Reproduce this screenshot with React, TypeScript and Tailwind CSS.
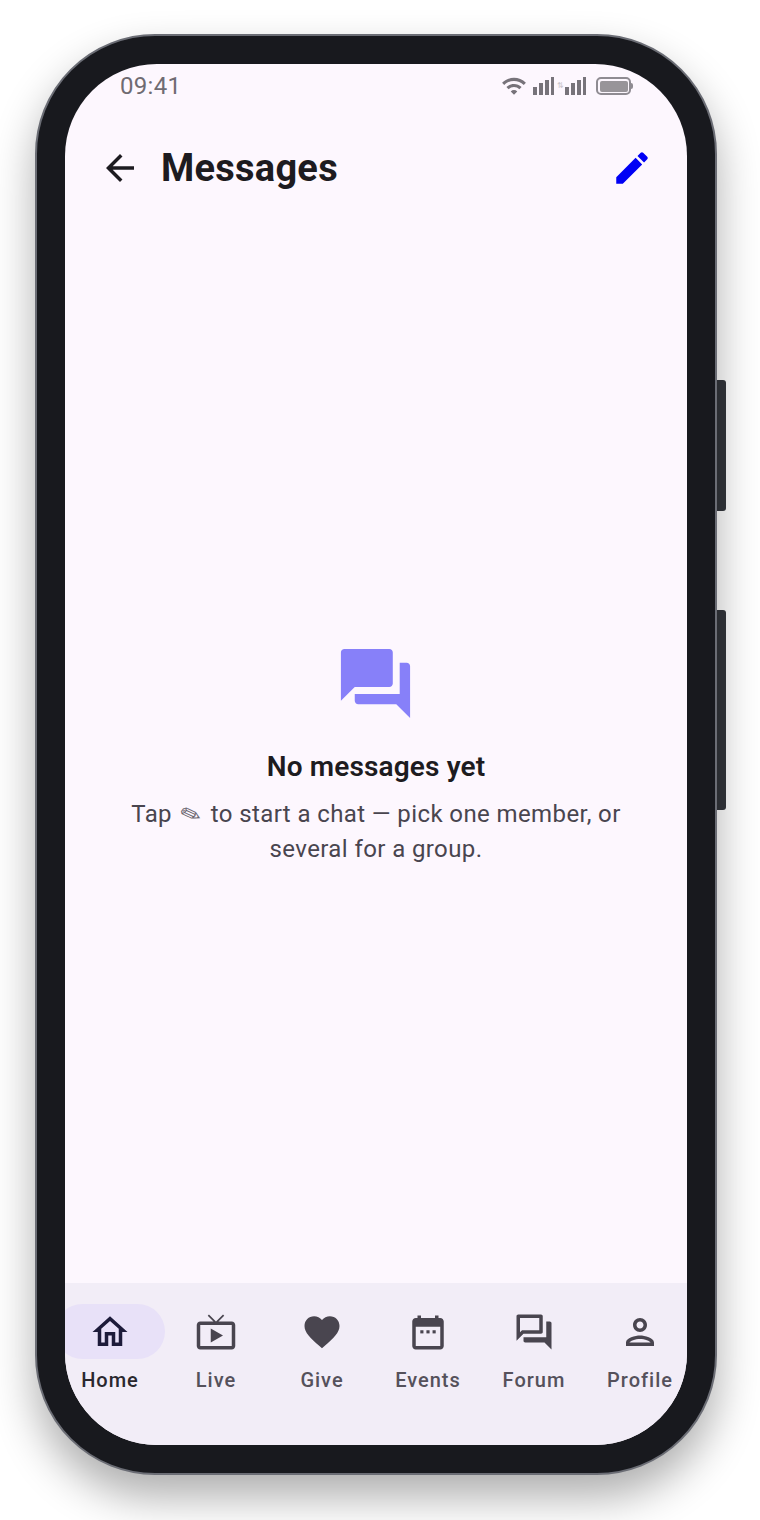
import type { ReactNode } from "react";
import {
  MdArrowBack,
  MdEdit,
  MdFavorite,
  MdForum,
  MdOutlineForum,
  MdOutlineHome,
  MdOutlineLiveTv,
  MdOutlinePerson,
  MdWifi,
} from "react-icons/md";

function CalendarIcon() {
  return (
    <svg viewBox="0 0 24 24" className="h-[42px] w-[42px]" fill="currentColor">
      <path d="M19 4h-1V2.5h-2V4H8V2.5H6V4H5c-1.1 0-2 .9-2 2v14c0 1.1.9 2 2 2h14c1.1 0 2-.9 2-2V6c0-1.1-.9-2-2-2zm0 16H5V9h14v11z" />
      <rect x="7.6" y="11" width="1.8" height="1.8" />
      <rect x="11.1" y="11" width="1.8" height="1.8" />
      <rect x="14.6" y="11" width="1.8" height="1.8" />
    </svg>
  );
}

function SignalBars() {
  return (
    <svg viewBox="0 0 22 18" className="h-[18px] w-[22px]" fill="currentColor">
      <rect x="0" y="10" width="4" height="8" />
      <rect x="6" y="6" width="4" height="12" />
      <rect x="12" y="3" width="4" height="15" />
      <rect x="18" y="0" width="3" height="18" />
    </svg>
  );
}

function StatusIcons() {
  return (
    <div className="flex items-center text-[#77737a]">
      <MdWifi className="h-[26px] w-[26px]" />
      <div className="ml-[6px]">
        <SignalBars />
      </div>
      <span className="mx-[2px] w-[6px] text-center text-[8px] leading-none text-[#c9c5cc]">⇅</span>
      <SignalBars />
      <div className="ml-[9px] flex items-center">
        <div className="h-[18px] w-[35px] rounded-[5px] border-2 border-[#8f8b92] p-[1.5px]">
          <div className="h-full w-full rounded-[2px] bg-[#989499]" />
        </div>
        <div className="h-[6px] w-[2px] rounded-r-sm bg-[#8f8b92]" />
      </div>
    </div>
  );
}

function NavItem({ icon, label, active }: { icon: ReactNode; label: string; active?: boolean }) {
  return (
    <div className="flex w-[106px] shrink-0 flex-col items-center">
      <div
        className={
          "flex h-[55px] w-[110px] items-center justify-center rounded-full " +
          (active ? "bg-[#e8e1f8] text-[#1d1b3a]" : "text-[#49454f]")
        }
      >
        {icon}
      </div>
      <span
        className={
          "mt-[6px] text-[20px] leading-[30px] font-medium tracking-[1px] " +
          (active ? "text-[#2a282e]" : "text-[#55515b]")
        }
      >
        {label}
      </span>
    </div>
  );
}

export default function App() {
  return (
    <div className="h-[1520px] w-[760px] overflow-hidden bg-white pt-[34px] pl-[35px] font-['Roboto',sans-serif]">
      <div className="relative h-[1441px] w-[682px]">
        {/* side buttons */}
        <div className="absolute top-[346px] -right-[9px] h-[131px] w-[11px] rounded-r-[3px] bg-[#33363c]" />
        <div className="absolute top-[576px] -right-[9px] h-[200px] w-[11px] rounded-r-[3px] bg-[#33363c]" />

        <div className="relative h-full w-full rounded-[120px] border-2 border-[#6b6d75] bg-[#18191e] p-[28px] shadow-[0_22px_44px_rgba(0,0,0,0.32)]">
          <div className="flex h-full w-full flex-col overflow-hidden rounded-[92px] bg-[#fdf7fe]">
            <div className="flex h-[44px] shrink-0 items-center justify-between pr-[54px] pl-[55px]">
              <span className="text-[24px] leading-none tracking-[0.3px] text-[#6f6b72]">09:41</span>
              <StatusIcons />
            </div>

            <header className="flex h-[120px] shrink-0 items-start pt-[39px] pr-[34px] pl-[34px] text-[#1d1b20]">
              <MdArrowBack className="h-[42px] w-[42px]" />
              <h1 className="ml-[20px] text-[38px] leading-[42px] font-bold tracking-[0.25px]">Messages</h1>
              <MdEdit className="ml-auto h-[42px] w-[42px] text-[#0000f5]" />
            </header>

            <main className="flex flex-1 flex-col items-center justify-center pb-[2px]">
              <MdForum className="mr-[2px] h-[83px] w-[83px] text-[#8780f9]" />
              <h2 className="mt-[24px] text-[28px] leading-[36px] font-semibold tracking-[0.15px] text-[#1d1b20]">
                No messages yet
              </h2>
              <p className="mt-[12px] w-[520px] text-center text-[24px] leading-[35px] tracking-[0.4px] text-[#49454f]">
                Tap{" "}
                <span className="inline-block w-[26px] -rotate-[15deg] scale-x-[1.2] text-center font-['DejaVu_Sans',sans-serif] text-[22px] leading-none font-normal text-[#6a666f]">
                  ✎
                </span>{" "}
                to start a chat — pick one member, or several for a group.
              </p>
            </main>

            <nav className="flex h-[162px] shrink-0 justify-center bg-[#f2edf7] pt-[21px] pr-[2px]">
              <NavItem active icon={<MdOutlineHome className="h-[42px] w-[42px]" />} label="Home" />
              <NavItem icon={<MdOutlineLiveTv className="h-[42px] w-[42px]" />} label="Live" />
              <NavItem icon={<MdFavorite className="h-[42px] w-[42px]" />} label="Give" />
              <NavItem icon={<CalendarIcon />} label="Events" />
              <NavItem icon={<MdOutlineForum className="h-[42px] w-[42px]" />} label="Forum" />
              <NavItem icon={<MdOutlinePerson className="h-[42px] w-[42px]" />} label="Profile" />
            </nav>
          </div>
        </div>
      </div>
    </div>
  );
}
